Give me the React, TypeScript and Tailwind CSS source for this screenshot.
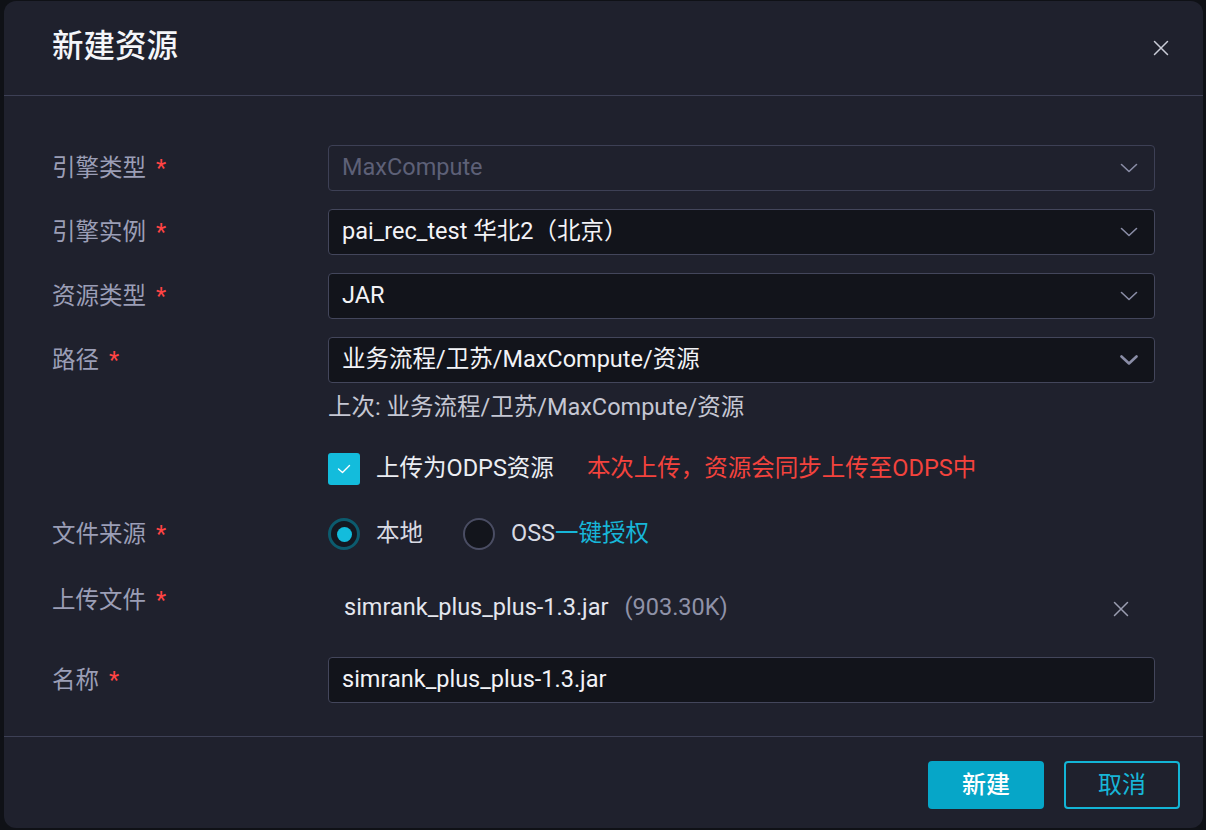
import React from 'react';

const font = { fontFamily: 'Roboto, "Noto Sans CJK SC", sans-serif' };

function Chevron({ bold }: { bold?: boolean }) {
  return (
    <svg width="18" height="10" viewBox="0 0 18 10" fill="none">
      <path
        d="M1.5 1.5 L9 8.5 L16.5 1.5"
        stroke="#8a8da6"
        strokeWidth={bold ? 2.6 : 1.6}
        strokeLinecap="round"
        strokeLinejoin="round"
      />
    </svg>
  );
}

function Cross({ size, color }: { size: number; color: string }) {
  return (
    <svg width={size} height={size} viewBox="0 0 16 16" fill="none">
      <path d="M1.5 1.5 L14.5 14.5 M14.5 1.5 L1.5 14.5" stroke={color} strokeWidth="1.5" strokeLinecap="round" />
    </svg>
  );
}

function Label({ text }: { text: string }) {
  return (
    <div className="w-[276px] shrink-0 text-[23.5px] leading-[30px] text-[#9b9eb6]">
      {text}
      <span className="ml-[10px] text-[#ff4444]">*</span>
    </div>
  );
}

function Select({ value, disabled, bold }: { value: string; disabled?: boolean; bold?: boolean }) {
  return (
    <div
      className={
        disabled
          ? 'flex h-[46px] flex-1 items-center justify-between rounded-[4px] border border-[#3d4055] bg-[#1f212d] pl-[13px] pr-[16px]'
          : 'flex h-[46px] flex-1 items-center justify-between rounded-[4px] border border-[#43465b] bg-[#12141b] pl-[13px] pr-[16px]'
      }
    >
      <span className={disabled ? 'text-[23.5px] text-[#5d6077]' : 'text-[23.5px] text-[#f2f3f7]'}>{value}</span>
      <Chevron bold={bold} />
    </div>
  );
}

export default function App() {
  return (
    <div className="min-h-screen w-full bg-[#0f1116] pt-px" style={font}>
      <div className="ml-[4px] flex h-[827px] w-[1199px] flex-col rounded-[12px] bg-[#1f212d]">
        <div className="flex h-[95px] shrink-0 items-center justify-between border-b border-[#3d4055] pl-[48px] pr-[34px]">
          <h1 className="pb-[2px] text-[31.5px] font-medium text-[#f5f6f9]">新建资源</h1>
          <Cross size={16} color="#c9cbd6" />
        </div>

        <div className="flex flex-1 flex-col border-b border-[#3d4055] pl-[48px] pr-[48px] pt-[49px]">
          <div className="flex items-center">
            <Label text="引擎类型" />
            <Select value="MaxCompute" disabled />
          </div>
          <div className="mt-[18px] flex items-center">
            <Label text="引擎实例" />
            <Select value="pai_rec_test 华北2（北京）" />
          </div>
          <div className="mt-[18px] flex items-center">
            <Label text="资源类型" />
            <Select value="JAR" />
          </div>
          <div className="mt-[18px] flex items-center">
            <Label text="路径" />
            <Select value="业务流程/卫苏/MaxCompute/资源" bold />
          </div>
          <div className="ml-[276px] mt-[12px] text-[23.5px] leading-[24px] text-[#c5c7d3]">
            上次: 业务流程/卫苏/MaxCompute/资源
          </div>

          <div className="ml-[276px] mt-[34px] flex h-[32px] items-center">
            <div className="flex h-[32px] w-[32px] items-center justify-center rounded-[3px] bg-[#13bcdc]">
              <svg width="14" height="10" viewBox="0 0 14 10" fill="none">
                <path d="M1.5 5 L5.5 8.5 L12.5 1.5" stroke="#ffffff" strokeWidth="1.4" strokeLinecap="round" strokeLinejoin="round" />
              </svg>
            </div>
            <span className="ml-[16px] text-[23.5px] text-[#eceef3]">上传为ODPS资源</span>
            <span className="ml-[33px] text-[23.5px] text-[#f4433d]">本次上传，资源会同步上传至ODPS中</span>
          </div>

          <div className="mt-[33px] flex h-[32px] items-center">
            <Label text="文件来源" />
            <div className="flex items-center">
              <div className="flex h-[32px] w-[32px] items-center justify-center rounded-full border-[3px] border-[#0c5b6e] bg-[#141821]">
                <div className="h-[15px] w-[15px] rounded-full bg-[#13bcdc]" />
              </div>
              <span className="ml-[16px] text-[23.5px] text-[#d8dae3]">本地</span>
              <div className="ml-[40px] h-[32px] w-[32px] rounded-full border-2 border-[#4a4d63] bg-[#13151c]" />
              <span className="ml-[16px] text-[23.5px] text-[#d8dae3]">
                OSS<span className="text-[#17b6d8]">一键授权</span>
              </span>
            </div>
          </div>

          <div className="mt-[35px] flex h-[46px] items-start">
            <Label text="上传文件" />
            <div className="flex h-[46px] flex-1 items-center pl-[16px] pr-[26px]">
              <span className="text-[23.5px] text-[#e4e6ee]">simrank_plus_plus-1.3.jar</span>
              <span className="ml-[16px] text-[23.5px] text-[#8f92a8]">(903.30K)</span>
              <div className="ml-auto flex items-center pt-[2px]">
                <Cross size={16} color="#9a9db0" />
              </div>
            </div>
          </div>

          <div className="mt-[26px] flex items-center">
            <Label text="名称" />
            <div className="flex h-[46px] flex-1 items-center rounded-[4px] border border-[#43465b] bg-[#12141b] pl-[13px]">
              <span className="text-[23.5px] text-[#f2f3f7]">simrank_plus_plus-1.3.jar</span>
            </div>
          </div>
        </div>

        <div className="flex h-[91px] shrink-0 items-start justify-end gap-[20px] pr-[23px] pt-[24px]">
          <button className="h-[48px] w-[116px] rounded-[4px] bg-[#06a6c8] text-[24px] font-medium text-white">
            新建
          </button>
          <button className="h-[48px] w-[116px] rounded-[4px] border-2 border-[#13b5d6] text-[24px] text-[#17b6d8]">
            取消
          </button>
        </div>
      </div>
    </div>
  );
}
